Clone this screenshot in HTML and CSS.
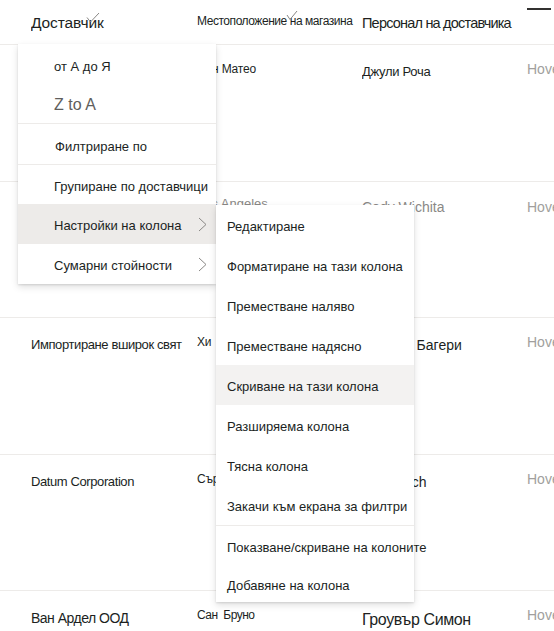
FILE: index.html
```html
<!DOCTYPE html>
<html lang="bg">
<head>
<meta charset="utf-8">
<title>Доставчици</title>
<link rel="stylesheet" href="styles.css">
</head>
<body>
<div class="page">
  <div class="grid">
    <div class="head">
      <div class="hc hc1">Доставчик</div>
      <div class="hc hc2">Местоположение на магазина</div>
      <div class="hc hc3">Персонал на доставчика</div>
      <div class="hc hc4"><span class="dash"></span></div>
    </div>
    <div class="row">
      <div class="cell c1">Адвенчър Уъркс</div>
      <div class="cell c2">Сан Матео</div>
      <div class="cell c3 c3s">Джули Роча</div>
      <div class="cell c4">Hovercraft</div>
    </div>
    <div class="row muted">
      <div class="cell c1">Алпин Ски Хаус</div>
      <div class="cell c2 big">Los Angeles</div>
      <div class="cell c3">Cody Wichita</div>
      <div class="cell c4">Hovercraft</div>
    </div>
    <div class="row">
      <div class="cell c1">Импортиране вширок свят</div>
      <div class="cell c2">Хи&nbsp;&nbsp;&nbsp;Лия</div>
      <div class="cell c3">Марина Багери</div>
      <div class="cell c4">Hovercraft</div>
    </div>
    <div class="row">
      <div class="cell c1">Datum Corporation</div>
      <div class="cell c2">Сърбия</div>
      <div class="cell c3">Анна Rich</div>
      <div class="cell c4">Hovercraft</div>
    </div>
    <div class="row last-row">
      <div class="cell c1 c1b">Ван Ардел ООД</div>
      <div class="cell c2 c2b">Сан&nbsp; Бруно</div>
      <div class="cell c3 c3b">Гроувър Симон</div>
      <div class="cell c4">Hovercraft</div>
    </div>
  </div>

  <svg class="tick tick1" width="14" height="12" viewBox="0 0 14 12"><path d="M1 5.5 L4.5 10 L13 1" fill="none" stroke="#8a8886" stroke-width="1"/></svg>
  <svg class="tick tick2" width="12" height="11" viewBox="0 0 12 11"><path d="M1 5 L4 9.5 L11 1" fill="none" stroke="#8a8886" stroke-width="1"/></svg>

  <div class="menu main-menu">
    <div class="item first">от А до Я</div>
    <div class="item za">Z to A</div>
    <div class="sep"></div>
    <div class="item tall">Филтриране по</div>
    <div class="sep"></div>
    <div class="item">Групиране по доставчици</div>
    <div class="item active">Настройки на колона<svg class="chev" width="9" height="15" viewBox="0 0 9 15"><path d="M1 1 L8 7.5 L1 14" fill="none" stroke="#8a8886" stroke-width="1"/></svg></div>
    <div class="item">Сумарни стойности<svg class="chev" width="9" height="15" viewBox="0 0 9 15"><path d="M1 1 L8 7.5 L1 14" fill="none" stroke="#8a8886" stroke-width="1"/></svg></div>
  </div>

  <div class="menu sub-menu">
    <div class="item">Редактиране</div>
    <div class="item">Форматиране на тази колона</div>
    <div class="item">Преместване наляво</div>
    <div class="item">Преместване надясно</div>
    <div class="item hover">Скриване на тази колона</div>
    <div class="item">Разширяема колона</div>
    <div class="item">Тясна колона</div>
    <div class="item">Закачи към екрана за филтри</div>
    <div class="sep"></div>
    <div class="item">Показване/скриване на колоните</div>
    <div class="item last">Добавяне на колона</div>
  </div>
</div>
</body>
</html>
```

FILE: styles.css
```css
* { box-sizing: border-box; }
html, body { margin: 0; padding: 0; background: #fff; }
body {
  font-family: "Liberation Sans", Arial, sans-serif;
  color: #201f1e;
  width: 554px;
  height: 631px;
  overflow: hidden;
}
.page { position: relative; width: 554px; height: 631px; overflow: hidden; }

.grid { display: flex; flex-direction: column; }
.head {
  display: flex;
  align-items: center;
  height: 45px;
  border-bottom: 1px solid #edebe9;
  padding-left: 31px;
}
.hc { white-space: nowrap; overflow: hidden; }
.hc1 { width: 166px; font-size: 15.5px; margin-top: 2px; letter-spacing: -0.1px; }
.hc2 { width: 165px; font-size: 12px; margin-top: -3px; letter-spacing: -0.45px; }
.hc3 { width: 165px; font-size: 14.5px; margin-top: 2px; letter-spacing: -0.8px; }
.hc4 { flex: 1; height: 30px; }
.dash { display: block; width: 24px; height: 2px; background: #323130; margin-top: 1px; }

.row {
  display: flex;
  align-items: flex-start;
  height: 136.5px;
  border-bottom: 1px solid #edebe9;
  padding: 14px 0 0 31px;
}
.row.last-row { height: 41px; border-bottom: 0; }
.cell { white-space: nowrap; overflow: hidden; line-height: 20px; }
.c1 { width: 166px; font-size: 13px; margin-top: 3px; letter-spacing: -0.4px; }
.c1b { font-size: 14px; letter-spacing: -0.5px; }
.c2 { width: 165px; font-size: 12px; letter-spacing: -0.2px; }
.c2b { letter-spacing: -0.5px; }
.c2.big { font-size: 13px; letter-spacing: 0; }
.c3 { width: 165px; font-size: 14px; margin-top: 3px; }
.c3s { font-size: 13px; letter-spacing: -0.3px; }
.c3b { font-size: 16px; margin-top: 5px; letter-spacing: -0.4px; }
.c4 { flex: 1; font-size: 14px; color: #a19f9d; }
.muted .cell { color: #8a8886; margin-top: -2px; }
.muted .c3 { margin-top: 1px; }
.muted .c4 { color: #a19f9d; margin-top: 1px; }

.tick { position: absolute; }
.tick1 { left: 86px; top: 12px; }
.tick2 { left: 286px; top: 10px; }

.menu {
  position: absolute;
  background: #fff;
  width: 198px;
  box-shadow: 0 3px 7px rgba(0, 0, 0, 0.13), 0 0.6px 1.8px rgba(0, 0, 0, 0.11);
  font-size: 13px;
  color: #201f1e;
}
.main-menu { left: 18px; top: 44px; padding-top: 3px; }
.sub-menu { left: 216px; top: 205px; }

.item {
  display: flex;
  align-items: center;
  height: 40px;
  padding-top: 3px;
  white-space: nowrap;
  position: relative;
}
.main-menu .item { padding-left: 36px; }
.sub-menu .item { padding-left: 11px; }
.main-menu .first { height: 38px; padding-top: 1px; }
.main-menu .za { height: 38px; font-size: 16px; color: #605e5c; padding-top: 1px; }
.main-menu .tall { height: 40px; padding-left: 37px; padding-top: 4px; }
.main-menu .active { margin-top: -1px; }
.item.active { background: #edebe9; }
.item.hover { background: #f3f2f1; }
.sub-menu .last { height: 36px; }
.chev { position: absolute; left: 180px; top: 13px; }
.sep { height: 1px; background: #edebe9; }
```
